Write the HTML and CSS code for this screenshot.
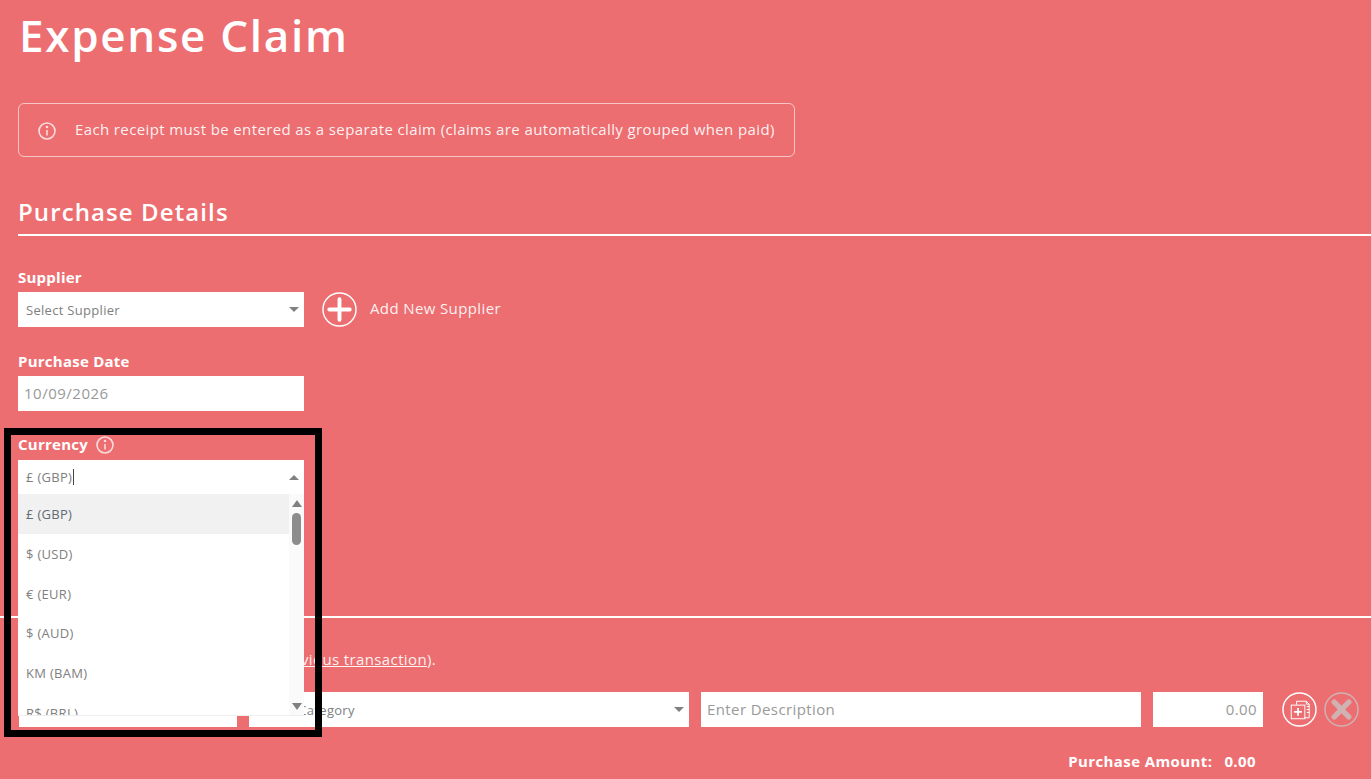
FILE: index.html
```html
<!DOCTYPE html>
<html lang="en">
<head>
    <meta charset="UTF-8">
    <title>Expense Claim</title>
    <link rel="stylesheet" href="styles.css">
</head>
<body>
    <h1>Expense Claim</h1>

    <div class="notice">
        <svg class="info-icon" viewBox="0 0 18 18"><circle cx="9" cy="9" r="8"/><path d="M9 8v5.500"/><circle class="dot" cx="9" cy="5" r="1.300"/></svg>
        <span>Each receipt must be entered as a separate claim (claims are automatically grouped when paid)</span>
    </div>

    <h2>Purchase Details</h2>

    <label class="field-label first">Supplier</label>
    <div class="supplier-row">
        <div class="select-box"><span>Select Supplier</span><i class="arrow-down"></i></div>
        <svg class="round-icon" viewBox="0 0 36 36"><circle cx="18" cy="18" r="17"/><path class="thick" d="M18 7.500v21M7.500 18h21"/></svg>
        <span class="add-link">Add New Supplier</span>
    </div>

    <label class="field-label">Purchase Date</label>
    <div class="text-box date-box">10/09/2026</div>

    <label class="field-label currency-label">Currency
        <svg class="info-icon small" viewBox="0 0 18 18"><circle cx="9" cy="9" r="8"/><path d="M9 8v5.500"/><circle class="dot" cx="9" cy="5" r="1.300"/></svg>
    </label>
    <div class="currency">
        <div class="select-box open"><span>£ (GBP)</span><b class="caret"></b><i class="arrow-up"></i></div>
        <div class="dropdown">
            <ul>
                <li class="current">£ (GBP)</li>
                <li>$ (USD)</li>
                <li>€ (EUR)</li>
                <li>$ (AUD)</li>
                <li>KM (BAM)</li>
                <li>R$ (BRL)</li>
            </ul>
            <div class="scrollbar">
                <i class="arrow-up"></i>
                <div class="thumb"></div>
                <i class="arrow-down"></i>
            </div>
        </div>
    </div>

    <hr>

    <p class="lines-note">Add each line of purchase (or <a href="#">copy previous transaction</a>).</p>

    <div class="line-row">
        <div class="select-box line-first"></div>
        <div class="select-box line-category"><span>Select Category</span><i class="arrow-down"></i></div>
        <div class="text-box line-description">Enter Description</div>
        <div class="text-box line-amount">0.00</div>
        <svg class="round-icon line-copy" viewBox="0 0 36 36">
            <circle cx="18" cy="18" r="17"/>
            <path class="thin" d="M15 13v-3.500h10l3 3v14h-5M25 9.500v3h3M25.500 15h2.500M25.500 18h2.500M25.500 21h2.500"/>
            <rect class="thin" x="9.500" y="13.500" width="14" height="14"/>
            <path class="mid" d="M16.500 16.500v8M12.500 20.500h8"/>
        </svg>
        <svg class="round-icon line-remove" viewBox="0 0 36 36"><circle cx="18" cy="18" r="17"/><path class="thicker" d="M10.500 10.500l15 15M25.500 10.500l-15 15"/></svg>
    </div>

    <div class="total"><span>Purchase Amount:</span><span>0.00</span></div>

    <div class="highlight-frame"></div>
</body>
</html>
```

FILE: styles.css
```css
html, body {
    margin: 0;
    height: 100%;
}
body {
    position: relative;
    height: 779px;
    overflow: hidden;
    box-sizing: border-box;
    padding-left: 18px;
    background-color: #ed6e71;
    color: white;
    font-family: "Open Sans", Arial, sans-serif;
    font-size: 15px;
    letter-spacing: 0.38px;
}
h1 {
    margin: 0 0 0 1px;
    font-size: 44px;
    line-height: 71px;
    font-weight: 600;
    letter-spacing: 1.7px;
}
.notice {
    display: flex;
    align-items: center;
    box-sizing: border-box;
    width: 777px;
    height: 54px;
    margin-top: 32px;
    padding-left: 19px;
    border: 1px solid rgba(255, 255, 255, 0.6);
    border-radius: 6px;
    color: rgba(255, 255, 255, 0.92);
    font-size: 15px;
}
.notice span {
    margin-bottom: 2px;
}
.info-icon {
    width: 18px;
    height: 18px;
    margin-right: 19px;
    margin-top: 2px;
    fill: none;
    stroke: rgba(255, 255, 255, 0.75);
    stroke-width: 1.6;
}
.info-icon .dot {
    fill: rgba(255, 255, 255, 0.75);
    stroke: none;
}
.info-icon.small {
    margin: 0 0 0 4px;
    vertical-align: -4px;
}
h2 {
    height: 44px;
    margin: 33px 0 0;
    border-bottom: 2px solid white;
    font-size: 24px;
    line-height: 44px;
    font-weight: 600;
    letter-spacing: 1.1px;
}
.field-label {
    display: block;
    height: 20px;
    margin-top: 24px;
    margin-bottom: 5px;
    font-size: 15px;
    line-height: 20px;
    font-weight: 700;
    letter-spacing: 0.25px;
}
.field-label.first {
    margin-top: 31px;
}
.field-label.currency-label {
    margin-top: 23px;
    margin-bottom: 6px;
}
.supplier-row {
    display: flex;
    align-items: center;
}
.select-box {
    position: relative;
    display: flex;
    align-items: center;
    box-sizing: border-box;
    width: 286px;
    height: 35px;
    padding: 1px 0 0 8px;
    background-color: white;
    color: #808080;
    font-size: 13px;
    letter-spacing: 0.3px;
}
.arrow-down, .arrow-up {
    display: block;
    width: 0;
    height: 0;
    border-left: 5px solid transparent;
    border-right: 5px solid transparent;
}
.arrow-down {
    border-top: 5px solid #808080;
}
.arrow-up {
    border-bottom: 5px solid #808080;
}
.select-box > .arrow-down, .select-box > .arrow-up {
    position: absolute;
    right: 5px;
    top: 15px;
}
.round-icon {
    flex: none;
    width: 35px;
    height: 35px;
    fill: none;
    stroke: white;
    stroke-width: 1.5;
}
.round-icon .thick {
    stroke-width: 4;
    stroke-linecap: round;
}
.round-icon .thicker {
    stroke-width: 5.5;
    stroke-linecap: round;
}
.round-icon .thin {
    stroke-width: 1;
}
.round-icon .mid {
    stroke-width: 1.8;
}
.supplier-row .round-icon {
    margin-left: 18px;
}
.add-link {
    margin-left: 13px;
    margin-bottom: 4px;
    font-size: 15px;
    color: rgba(255, 255, 255, 0.92);
}
.text-box {
    display: flex;
    align-items: center;
    box-sizing: border-box;
    height: 35px;
    background-color: white;
    color: #999;
}
.date-box {
    width: 286px;
    padding-left: 6px;
    padding-bottom: 1px;
    font-size: 15px;
    letter-spacing: 0.5px;
}
.currency {
    position: relative;
    width: 286px;
    height: 35px;
}
.currency .select-box {
    height: 34px;
    padding-top: 0;
}
.caret {
    display: block;
    width: 1px;
    height: 16px;
    margin-left: 1px;
    background-color: #444;
}
.dropdown {
    position: absolute;
    left: 0;
    top: 34px;
    display: flex;
    width: 286px;
    height: 222px;
    overflow: hidden;
    background-color: white;
    border-bottom: 1px solid #eee;
    box-sizing: border-box;
    z-index: 2;
}
.dropdown ul {
    flex: 1;
    margin: 0;
    padding: 0;
    list-style: none;
    color: #808080;
    font-size: 13px;
    letter-spacing: 0.3px;
}
.dropdown li {
    height: 39.8px;
    padding-left: 8px;
    line-height: 41.8px;
}
.dropdown li.current {
    background-color: #f1f1f1;
    color: #5f6b75;
}
.scrollbar {
    display: flex;
    flex-direction: column;
    align-items: center;
    box-sizing: border-box;
    width: 15px;
    padding: 6px 0 0;
    background-color: #fafafa;
}
.scrollbar .arrow-up, .scrollbar .arrow-down {
    flex: none;
}
.scrollbar .arrow-up {
    border-bottom-width: 7px;
}
.scrollbar .arrow-down {
    margin-top: 158px;
    border-top-width: 7px;
}
.thumb {
    flex: none;
    width: 9px;
    height: 32px;
    margin-top: 6px;
    border-radius: 5px;
    background-color: #8c8c8c;
}
hr {
    height: 2px;
    margin: 121px 0 0 -18px;
    border: none;
    background-color: white;
}
.lines-note {
    margin: 31px 0 0;
    font-size: 15px;
    line-height: 20px;
    color: rgba(255, 255, 255, 0.92);
}
.lines-note a {
    color: inherit;
}
.line-row {
    display: flex;
    align-items: center;
    gap: 12px;
    margin-top: 23px;
}
.line-first {
    width: 218px;
    margin-left: 1px;
}
.line-category {
    width: 440px;
    padding-top: 0;
}
.line-description {
    width: 440px;
    padding-left: 6px;
    padding-bottom: 2px;
    font-size: 15px;
    letter-spacing: 0.4px;
}
.line-amount {
    justify-content: flex-end;
    width: 110px;
    padding-right: 6px;
    padding-bottom: 2px;
    font-size: 15px;
    letter-spacing: 0.4px;
}
.line-copy {
    margin-left: 7px;
}
.line-remove {
    margin-left: -5px;
    stroke: rgba(200, 195, 195, 0.8);
}
.total {
    display: flex;
    justify-content: flex-end;
    gap: 12px;
    margin-top: 24px;
    padding-right: 115px;
    font-size: 15px;
    line-height: 20px;
    font-weight: 700;
    letter-spacing: 0.4px;
}
.highlight-frame {
    position: absolute;
    left: 4px;
    top: 428px;
    box-sizing: border-box;
    width: 318px;
    height: 309px;
    border: 7px solid black;
    z-index: 3;
}
```
